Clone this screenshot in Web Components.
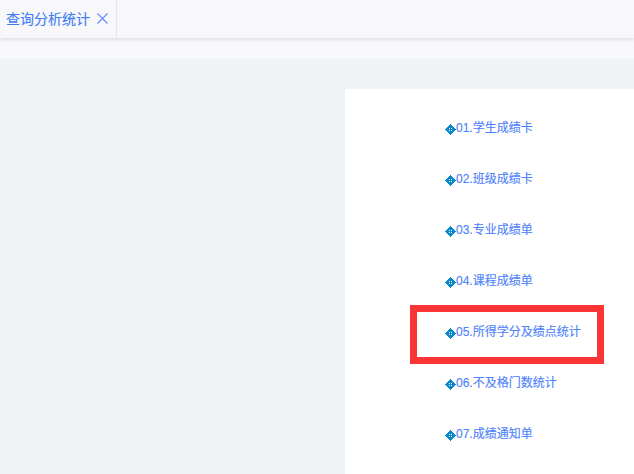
<!DOCTYPE html>
<html lang="zh">
<head>
<meta charset="utf-8">
<title>查询分析统计</title>
<style>
html, body { margin: 0; height: 100%; overflow: hidden; background: #eff3f6; }
body { font-family: "Liberation Sans", "Noto Sans CJK SC", sans-serif; display: flex; flex-direction: column; }
</style>
</head>
<body>
<tab-bar>
	<tab-item>查询分析统计</tab-item>
</tab-bar>
<report-panel>
	<report-link>01.学生成绩卡</report-link>
	<report-link>02.班级成绩卡</report-link>
	<report-link>03.专业成绩单</report-link>
	<report-link>04.课程成绩单</report-link>
	<report-link marked>05.所得学分及绩点统计</report-link>
	<report-link>06.不及格门数统计</report-link>
	<report-link>07.成绩通知单</report-link>
</report-panel>
<script>
class TabBar extends HTMLElement {
	constructor() {
		super();
		this.root = this.attachShadow({ mode: 'open' });
		this.root.innerHTML = `
            <style>
                :host {
                    display: block;
                    height: 59px;
                    flex: none;
                    background-color: #f8f7f9;
                }
                .bar {
                    display: flex;
                    height: 38px;
                    background-color: #f8f8fa;
                    box-shadow: 0 1px 4px rgba(0, 0, 0, 0.14);
                }
            </style>
            <div class="bar"><slot></slot></div>
        `;
	}
}

class TabItem extends HTMLElement {
	constructor() {
		super();
		this.root = this.attachShadow({ mode: 'open' });
		this.root.innerHTML = `
            <style>
                :host {
                    display: flex;
                    align-items: center;
                    gap: 7px;
                    box-sizing: border-box;
                    width: 117px;
                    height: 38px;
                    padding: 0 0 0 6px;
                    border-right: 1px solid #e6e6e9;
                    color: #3f7cf8;
                    font-size: 14px;
                    line-height: 38px;
                    -webkit-text-stroke: 0.15px #3f7cf8;
                }
                svg {
                    width: 11px;
                    height: 11px;
                    margin-top: -2px;
                }
            </style>
            <slot></slot>
            <svg viewBox="0 0 11 11" fill="none" stroke="#5f8cf6" stroke-width="1.1"><path d="M0.5 0.5 10.5 10.5M10.5 0.5 0.5 10.5"/></svg>
        `;
	}
}

class ReportPanel extends HTMLElement {
	constructor() {
		super();
		this.root = this.attachShadow({ mode: 'open' });
		this.root.innerHTML = `
            <style>
                :host {
                    display: block;
                    flex: 1;
                    min-height: 0;
                    padding: 30px 0 0 345px;
                }
                .panel {
                    display: flex;
                    flex-direction: column;
                    height: 100%;
                    padding: 14px 0 0 100px;
                    box-sizing: border-box;
                    background-color: white;
                }
            </style>
            <div class="panel"><slot></slot></div>
        `;
	}
}

class ReportLink extends HTMLElement {
	constructor() {
		super();
		this.root = this.attachShadow({ mode: 'open' });
		this.root.innerHTML = `
            <style>
                :host {
                    display: block;
                    position: relative;
                    flex: none;
                    height: 51px;
                }
                a {
                    display: flex;
                    align-items: center;
                    height: 51px;
                    color: #4f83fb;
                    font-size: 12px;
                    line-height: 51px;
                    text-decoration: none;
                    -webkit-text-stroke: 0.15px #4f83fb;
                }
                svg {
                    flex: none;
                    width: 11px;
                    height: 11px;
                    margin-top: 2px;
                }
                .mark {
                    display: none;
                    position: absolute;
                    left: -35px;
                    top: -2px;
                    width: 194px;
                    height: 59px;
                    box-sizing: border-box;
                    border: 7px solid #fb3535;
                }
                :host([marked]) .mark { display: block; }
            </style>
            <a href="#">
                <svg viewBox="0 0 11 11" shape-rendering="crispEdges">
                    <path fill="#0a88cc" d="M5 0h1v1h1v1h1v1h1v1h1v1h1v1h-1v1h-1v1h-1v1h-1v1h-1v1h-1v-1h-1v-1h-1v-1h-1v-1h-1v-1h-1v-1h1v-1h1v-1h1v-1h1v-1h1z"/>
                    <path fill="#fff" d="M4 4h1v1h-1zM6 4h1v1h-1zM4 6h1v1h-1zM6 6h1v1h-1z"/>
                </svg>
                <span><slot></slot></span>
            </a>
            <div class="mark"></div>
        `;
	}
}

customElements.define('tab-bar', TabBar);
customElements.define('tab-item', TabItem);
customElements.define('report-panel', ReportPanel);
customElements.define('report-link', ReportLink);
</script>
</body>
</html>
